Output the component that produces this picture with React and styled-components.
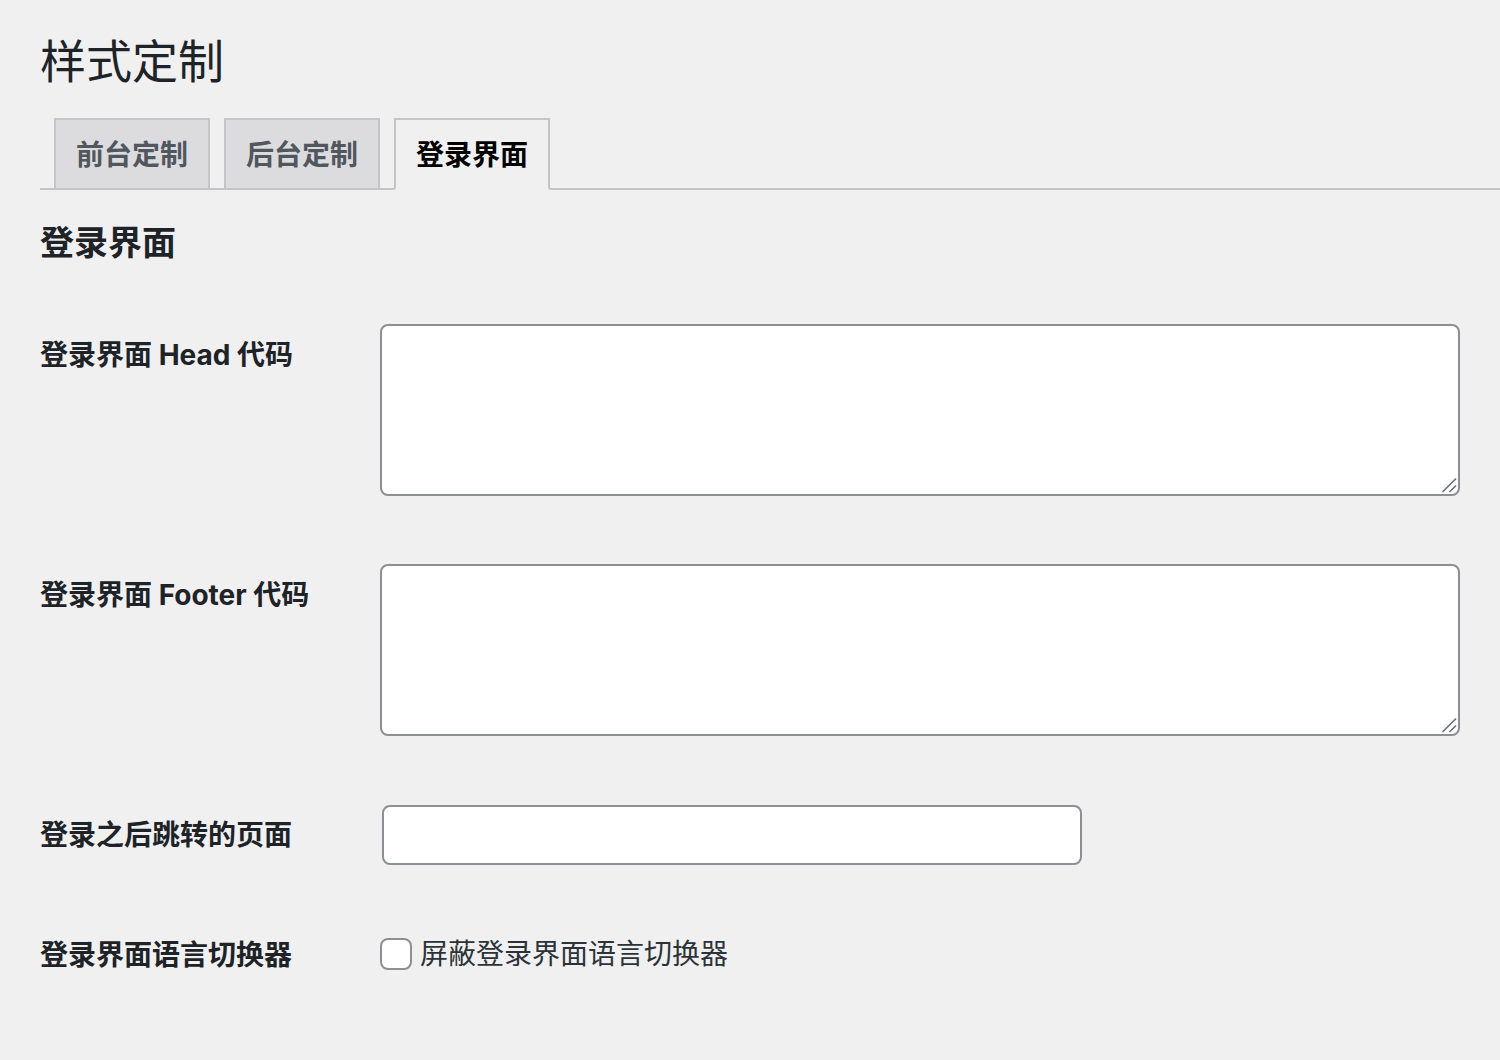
import React from "react";
import styled, { createGlobalStyle } from "styled-components";

const tabs = [
  { id: "front", label: "前台定制" },
  { id: "admin", label: "后台定制" },
  { id: "login", label: "登录界面" },
];

const GlobalStyle = createGlobalStyle`
  html, body {
    margin: 0;
    background: #f0f0f1;
  }
  body {
    font-family: Inter, "Noto Sans CJK SC", sans-serif;
    color: #1d2327;
  }
`;

const Wrap = styled.div`
  padding: 31px 0 60px 40px;
`;

const Title = styled.h1`
  margin: 0;
  font-size: 46px;
  font-weight: 400;
  line-height: 60px;
  color: #1d2327;
`;

const TabBar = styled.nav`
  display: flex;
  gap: 14px;
  margin-top: 27px;
  padding-left: 14px;
  border-bottom: 2px solid #c3c4c7;
`;

const Tab = styled.a`
  display: block;
  box-sizing: border-box;
  padding: 11px 20px 9px;
  margin-bottom: -2px;
  font-size: 28px;
  font-weight: 700;
  line-height: 48px;
  border: 2px solid #c3c4c7;
  border-bottom-color: ${({ $active }) => ($active ? "#f0f0f1" : "#c3c4c7")};
  background: ${({ $active }) => ($active ? "#f0f0f1" : "#dcdcde")};
  color: ${({ $active }) => ($active ? "#000" : "#50575e")};
  text-decoration: none;
  cursor: pointer;
`;

const SectionTitle = styled.h2`
  margin: 31px 0 0;
  font-size: 34px;
  font-weight: 700;
  line-height: 44px;
  color: #1d2327;
`;

const Form = styled.div`
  margin-top: 31px;
  padding-right: 40px;
`;

const Row = styled.div`
  display: grid;
  grid-template-columns: 340px 1fr;
  align-items: start;
`;

const Label = styled.label`
  padding-top: 41px;
  margin-bottom: -1px;
  font-size: 28px;
  font-weight: 700;
  line-height: 36px;
  color: #1d2327;
`;

const Field = styled.div`
  position: relative;
  display: flex;
  align-items: center;
  padding: ${({ $tight }) => ($tight ? "40px 0 0" : "28px 0 31px")};
`;

const TextArea = styled.textarea`
  display: block;
  box-sizing: border-box;
  width: 100%;
  height: 172px;
  margin: 0 0 9px;
  padding: 4px 16px;
  border: 2px solid #8c8f94;
  border-radius: 8px;
  background: #fff;
  font-size: 28px;
  resize: none;
`;

const Grip = styled.svg`
  position: absolute;
  right: 3px;
  bottom: 43px;
  width: 16px;
  height: 16px;
  pointer-events: none;
`;

const TextInput = styled.input`
  box-sizing: border-box;
  width: 700px;
  height: 60px;
  margin: 1px 2px 0;
  padding: 0 16px;
  border: 2px solid #8c8f94;
  border-radius: 8px;
  background: #fff;
  font-size: 28px;
`;

const CheckLabel = styled.label`
  display: flex;
  align-items: center;
  gap: 8px;
  font-size: 28px;
  line-height: 36px;
  color: #2c3338;
`;

const CheckBox = styled.input`
  appearance: none;
  box-sizing: border-box;
  width: 32px;
  height: 32px;
  margin: 0;
  border: 2px solid #8c8f94;
  border-radius: 8px;
  background: #fff;
`;

const ResizeGrip = () => (
  <Grip viewBox="0 0 16 16">
    <path d="M1.5 15 L15 1.5 M8.5 15 L15 8.5" stroke="#6b6e73" strokeWidth="1.6" fill="none" />
  </Grip>
);

const CodeField = () => (
  <Field>
    <TextArea />
    <ResizeGrip />
  </Field>
);

export default function App() {
  return (
    <Wrap>
      <GlobalStyle />
      <Title>样式定制</Title>
      <TabBar>
        {tabs.map((t) => (
          <Tab key={t.id} $active={t.id === "login"}>
            {t.label}
          </Tab>
        ))}
      </TabBar>

      <SectionTitle>登录界面</SectionTitle>

      <Form>
        <Row>
          <Label>登录界面 Head 代码</Label>
          <CodeField />
        </Row>
        <Row>
          <Label>登录界面 Footer 代码</Label>
          <CodeField />
        </Row>
        <Row>
          <Label>登录之后跳转的页面</Label>
          <Field>
            <TextInput type="text" />
          </Field>
        </Row>
        <Row>
          <Label>登录界面语言切换器</Label>
          <Field $tight>
            <CheckLabel>
              <CheckBox type="checkbox" />
              屏蔽登录界面语言切换器
            </CheckLabel>
          </Field>
        </Row>
      </Form>
    </Wrap>
  );
}
